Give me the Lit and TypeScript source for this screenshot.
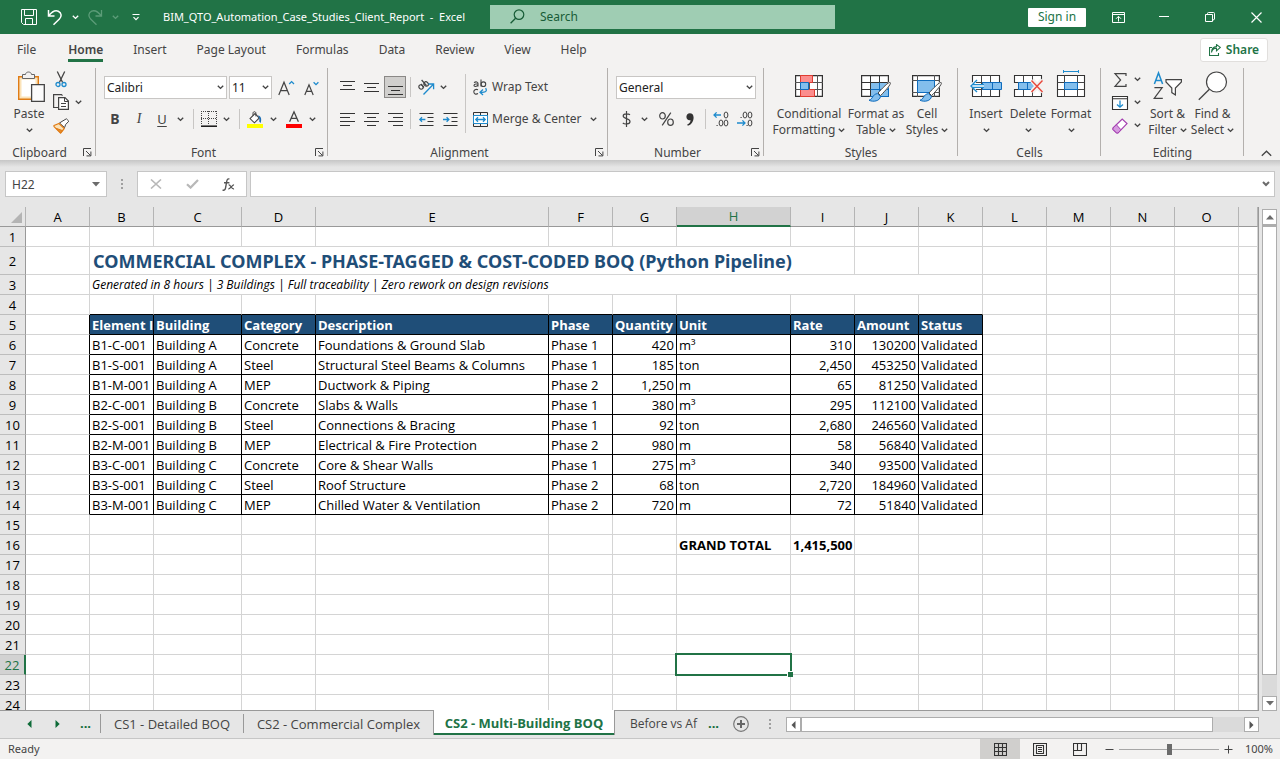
import { LitElement, html, svg, css, nothing, TemplateResult } from 'lit';
import { customElement, property } from 'lit/decorators.js';
import { classMap } from 'lit/directives/class-map.js';

const icon = (w: number, h: number, body: unknown) =>
  html`<svg width=${w} height=${h} viewBox="0 0 ${w} ${h}" fill="none" stroke="#444" stroke-width="1" aria-hidden="true">${body}</svg>`;

const chev = () => icon(7, 5, svg`<path d="M.8 .8L3.5 3.4L6.2 .8" stroke-width="1.4"/>`);

const I = {
  save: () => icon(17, 17, svg`<path stroke="#fff" d="M.5 .5H15.5V15.5H2.5L.5 13.5ZM3.5 .5V6.5H12.5V.5M4.5 15.5V9.5H11.5V15.5"/>`),
  undo: () => icon(16, 17, svg`<path stroke="#fff" stroke-width="1.5" d="M1.5 1V7H7.5M1.8 6.7C5 2.6 8.4 1 11.3 2.2C14.8 3.8 14.8 7.6 12.4 10L6.5 15.8"/>`),
  redo: () => icon(16, 17, svg`<path stroke="#5c9c78" stroke-width="1.3" d="M14.5 1V7H8.5M14.2 6.7C11 2.6 7.6 1 4.7 2.2C1.2 3.8 1.2 7.6 3.6 10L9.5 15.8"/>`),
  wchev: () => icon(7, 5, svg`<path stroke="#fff" d="M.8 .8L3.5 3.4L6.2 .8" stroke-width="1.4"/>`),
  dchev: () => icon(7, 5, svg`<path stroke="#5c9c78" d="M.8 .8L3.5 3.4L6.2 .8" stroke-width="1.4"/>`),
  qat: () => icon(8, 7, svg`<path stroke="#fff" d="M.5 .5H7.5M1.5 3.2L4 5.7L6.5 3.2" stroke-width="1.2"/>`),
  find: () => icon(15, 15, svg`<circle cx="9" cy="5.6" r="4.8" stroke="#185c37" stroke-width="1.2"/><path stroke="#185c37" stroke-width="1.3" d="M5.6 9.2L.6 14.3"/>`),
  ribbonOpts: () => icon(13, 11, svg`<path stroke="#fff" d="M.5 .5H12.5V10.5H.5ZM.5 2.5H12.5M6.5 9.5V4.5M4 6.8L6.5 4.3L9 6.8"/>`),
  min: () => icon(10, 10, svg`<path stroke="#fff" d="M0 4.5H10"/>`),
  restore: () => icon(10, 10, svg`<path stroke="#fff" d="M.5 2.5H7.5V9.5H.5ZM2.5 2.5V1.5Q2.5 .5 3.5 .5H8.5Q9.5 .5 9.5 1.5V7Q9.5 8 7.5 8"/>`),
  close: () => icon(11, 11, svg`<path stroke="#fff" stroke-width="1.2" d="M.5 .5L10.5 10.5M10.5 .5L.5 10.5"/>`),
  share: () => icon(12, 12, svg`<path stroke="#217346" stroke-width="1.1" d="M3 3.5H.5V11.5H9.5V9M2.5 8.5C3 5.5 5 4.2 7.5 4.2V6.8L11.3 3.4L7.5 .6V2.6C4.5 2.8 2.6 5 2.5 8.5Z"/>`),
  paste: () => icon(28, 32, svg`<path stroke="#e07c16" fill="#fbe3b9" stroke-width="1.4" d="M1.7 5.7H21.3V28.3H1.7Z"/><path stroke="none" fill="#fff" d="M4.5 8.5H18.5V25.5H4.5Z"/><path fill="#f3f2f1" stroke="#666" d="M5.5 7.5V3.5H8.5C8.7 .2 14.3 .2 14.5 3.5H17.5V7.5Z"/><path fill="#fbfbfb" stroke="#444" stroke-width="1.3" d="M14.6 13.6H27.3V30.4H14.6Z"/>`),
  cut: () => icon(12, 17, svg`<path stroke-width="1.3" d="M2.3 .5L7.6 11.5M9.7 .5L4.4 11.5"/><circle cx="3" cy="13.5" r="2" stroke="#1e8bcd" stroke-width="1.3"/><circle cx="9" cy="13.5" r="2" stroke="#1e8bcd" stroke-width="1.3"/>`),
  copy: () => icon(17, 17, svg`<path stroke-width="1.2" d="M5.5 13.5H.6V.6H8.5L9.5 1.6"/><path fill="#fff" stroke-width="1.2" d="M5.6 3.6H12L15.4 7V15.4H5.6Z"/><path d="M11.5 3.5V7.5H15.5M8 9.5H13M8 12.5H13"/>`),
  painter: () => icon(17, 16, svg`<path stroke="#444" fill="#fff" d="M6.5 5L9 3.4L13.4 .8L15.8 3.2L12.6 6.6L11.6 9.6Z"/><path stroke="#e07c16" fill="#fbe3b9" stroke-width="1.2" d="M1 7.5L6 5.5L11.3 10.5L7.6 15L1 8.6Z"/><path stroke="#e07c16" fill="#e98d2c" d="M3 10.3L9.5 12.6L7.6 15Z"/>`),
  launch: () => icon(9, 9, svg`<path d="M.5 8V.5H8M3 3L7.5 7.5M7.9 3.5V7.9H3.5"/>`),
  growFont: () => icon(17, 16, svg`<path stroke-width="1.2" d="M.8 15L6 2.2L11.2 15M2.6 10.6H9.4"/><path stroke="#1e8bcd" stroke-width="1.3" d="M11.2 4L13.6 1.6L16 4"/>`),
  shrinkFont: () => icon(15, 16, svg`<path stroke-width="1.2" d="M.8 15L5 4.8L9.2 15M2.3 11.4H7.7"/><path stroke="#1e8bcd" stroke-width="1.3" d="M9.6 2.2L12 4.6L14.4 2.2"/>`),
  borders: () => icon(16, 16, svg`<path stroke-dasharray="1 1" d="M0 .5H16M0 7.5H15M.5 0V14M7.5 0V14M15.5 0V14"/><path stroke="#111" stroke-width="1.5" d="M0 15.2H16"/>`),
  fill: () => icon(16, 17, svg`<path fill="#fff" stroke-width="1.1" d="M3 7.6L8 2.6L12.3 7L7.4 11.8Z"/><path d="M6 4.6V2.2C6.1 .2 8.8 .2 8.9 2.2V5.4"/><path fill="#1e6fb4" stroke="none" d="M11 4.4C14 4.8 15 8 13.6 12L12.2 10.6L12.4 7.4Z"/><path fill="#ff0" stroke="none" d="M0 13H16V17H0Z"/>`),
  color: () => icon(16, 17, svg`<path stroke-width="1.3" d="M3.6 10.8L8 .8L12.4 10.8M5.2 7.4H10.8"/><path fill="#f00" stroke="none" d="M0 13H16V17H0Z"/>`),
  lines: (d: string) => icon(15, 15, svg`<path stroke="#333" stroke-width="1.1" d=${d}/>`),
  orient: () => icon(17, 16, svg`<g stroke-width="1.2"><ellipse cx="3" cy="8" rx="2" ry="2.3" transform="rotate(-45 3 8)"/><path d="M3 5L6 8.4"/><ellipse cx="8.2" cy="5" rx="2" ry="2.4" transform="rotate(-45 8.2 5)"/><path d="M3.6 1L8.6 6.6"/></g><path stroke="#1e8bcd" stroke-width="1.3" d="M5.5 15.5L15.4 5.2M10.4 5H15.6V10.2"/>`),
  wrap: () => icon(15, 17, svg`<g stroke-width="1.1"><path d="M1 3.6C2.8 2.4 5 2.8 5 4.6V7.6M5 5H3C.4 5.2 .5 7.6 2.4 7.5Q4.4 7.3 5 6"/><path d="M8 .5V7.6"/><circle cx="10.4" cy="5.2" r="2.3"/><path d="M5 10.8C2.6 9.6 .8 11 .8 12.8C.8 14.8 2.8 15.8 5 14.6"/></g><path stroke="#1e8bcd" stroke-width="1.3" d="M12.6 9.2C15 13 11 13.6 7.2 13.2M10 10.4L7 13.2L10 16"/>`),
  merge: () => icon(15, 15, svg`<path stroke="#333" d="M.5 .5H14.5V14.5H.5ZM7.5 .5V3M7.5 12V14.5"/><path stroke="#1e8bcd" fill="#fff" d="M.5 3.5H14.5V11.5H.5Z"/><path stroke="#1e8bcd" stroke-width="1.3" d="M3 7.5H12M5 5.3L2.8 7.5L5 9.7M10 5.3L12.2 7.5L10 9.7"/>`),
  outdent: () => icon(15, 13, svg`<path stroke="#333" d="M.5 .5H14.5M8.5 4.5H14.5M8.5 8.5H14.5M.5 12.5H14.5"/><path stroke="#1e8bcd" stroke-width="1.3" d="M.8 6.5H6.4M3 4.2L.8 6.5L3 8.8"/>`),
  indent: () => icon(15, 13, svg`<path stroke="#333" d="M.5 .5H14.5M8.5 4.5H14.5M8.5 8.5H14.5M.5 12.5H14.5"/><path stroke="#1e8bcd" stroke-width="1.3" d="M0 6.5H5.8M3.6 4.2L5.9 6.5L3.6 8.8"/>`),
  dollar: () => icon(9, 16, svg`<path stroke-width="1.2" d="M8 3.8C6.5 2.6 1.2 2.2 1.2 5C1.2 8 8 7.2 8 10.4C8 13.6 2.4 13.4 .8 12M4.5 0V16"/>`),
  percent: () => icon(15, 14, svg`<g stroke-width="1.2"><ellipse cx="3.5" cy="3.8" rx="2.8" ry="3.2"/><ellipse cx="11.5" cy="10.2" rx="2.8" ry="3.2"/><path d="M11.8 .6L3.2 13.4"/></g>`),
  comma: () => icon(8, 13, svg`<path stroke="none" fill="#333" d="M3.8 .2C6.2 .2 7.6 1.8 7.6 4.4C7.6 8.4 5.4 11.6 1.8 12.8L1.2 11.6C3.4 10.4 4.4 9 4.6 7.2C2.2 7.8 .4 6.2 .4 3.8C.4 1.8 1.8 .2 3.8 .2Z"/>`),
  incDec: () => icon(16, 16, svg`<path stroke="#1e8bcd" stroke-width="1.3" d="M1 4H8M3.6 1.4L1 4L3.6 6.6"/><g><ellipse cx="13" cy="4" rx="1.9" ry="3"/><ellipse cx="8" cy="12" rx="1.9" ry="3"/><ellipse cx="13" cy="12" rx="1.9" ry="3"/><path d="M3.5 14.5H4.7"/></g>`),
  decDec: () => icon(16, 16, svg`<path stroke="#1e8bcd" stroke-width="1.3" d="M0 12H8M5.4 9.4L8 12L5.4 14.6"/><g><ellipse cx="8" cy="4" rx="1.9" ry="3"/><ellipse cx="13" cy="4" rx="1.9" ry="3"/><ellipse cx="13" cy="12" rx="1.9" ry="3"/><path d="M3.5 6.5H4.7M9.5 14.5H10.7"/></g>`),
  condFmt: () => icon(28, 24, svg`<path fill="#fff" stroke="#333" stroke-width="1.2" d="M.6 1.6H27.4V22.4H.6Z"/><path stroke="#555" d="M5.5 1V23M14.5 1V23M22.5 1V23M0 8.5H28M0 15.5H28"/><path fill="#fb8d8d" stroke="#e03c31" d="M5.5 1.5H17.5V8.5H5.5ZM5.5 15.5H19.5V22.5H5.5Z"/><path fill="#83beec" stroke="#0f6cbd" d="M5.5 8.5H13.5V15.5H5.5Z"/>`),
  fmtTable: () => icon(30, 24, svg`<path fill="#fff" stroke="#333" stroke-width="1.2" d="M.6 1.6H27.4V22.4H.6Z"/><path fill="#83beec" stroke="#0f6cbd" d="M9.5 8.5H27.5V22.5H9.5Z"/><path stroke="#333" d="M.5 8.5H27M.5 15.5H9M9.5 1V22M18.5 1V8"/><path stroke="#0f6cbd" d="M9.5 15.5H27.5M18.5 8.5V22.5"/>${brush}`),
  cellStyles: () => icon(30, 24, svg`<path fill="#fff" stroke="#333" stroke-width="1.2" d="M.6 1.6H27.4V22.4H.6Z"/><path stroke="#555" d="M5.5 1V23M22.5 1V23M0 6.5H28M0 18.5H28"/><path fill="#83beec" stroke="#0f6cbd" d="M5.5 6.5H22.5V18.5H5.5Z"/>${brush}`),
  insert: () => icon(32, 24, svg`<path fill="#fff" stroke="#333" stroke-width="1.1" d="M2.5 1.5H29.5V22.5H2.5Z"/><path stroke="#444" d="M2.5 8.5H29.5M2.5 15.5H29.5M11.5 1.5V22.5M20.5 1.5V22.5"/><path fill="#83beec" stroke="#0f6cbd" d="M12.5 8.5H31.5V15.5H12.5ZM22.5 8.5V15.5"/><path fill="#fff" stroke="none" d="M0 10.5L6 5V10H14V14H6V19Z"/><path stroke="#1e8bcd" stroke-width="1.4" d="M7 6L1 12L7 18M2 10.6H14M2 13.4H14"/>`),
  remove: () => icon(32, 24, svg`<path fill="#fff" stroke="#333" stroke-width="1.1" d="M2.5 1.5H29.5V8.5H2.5ZM2.5 15.5H29.5V22.5H2.5Z"/><path stroke="#444" d="M11.5 1.5V8.5M20.5 1.5V8.5M11.5 15.5V22.5M20.5 15.5V22.5"/><path fill="#83beec" stroke="#0f6cbd" d="M6.5 8.5H20L23 12L20 15.5H6.5ZM15.5 8.5V15.5"/><path stroke="#f3f2f1" stroke-width="5" d="M20 6L30.5 18M30.5 6L20 18"/><path stroke="#e8463a" stroke-width="1.4" d="M19.5 6.5L30.5 18M30.5 6.5L19.5 18"/>`),
  format: () => icon(28, 32, svg`<path fill="#fff" stroke="#333" stroke-width="1.1" d="M.5 5.5H27.5V26.5H.5Z"/><path stroke="#444" d="M.5 12.5H27.5M.5 19.5H27.5M7.5 5.5V26.5M20.5 5.5V26.5"/><path fill="#83beec" stroke="#0f6cbd" d="M7.5 12.5H20.5V19.5H7.5Z"/><path stroke="#1e8bcd" d="M6.5 0V3M21.5 0V3M6.5 1.5H21.5"/>`),
  sum: () => icon(13, 14, svg`<path stroke-width="1.2" d="M12 3V.6H1L6.6 7L1 13.4H12V11"/>`),
  fillDown: () => icon(16, 14, svg`<path fill="#fff" stroke="#333" stroke-width="1.1" d="M.5 .5H15.5V13.5H.5ZM.5 2.8H15.5"/><path stroke="#1e8bcd" stroke-width="1.3" d="M8 4.4V11M5 8.4L8 11.2L11 8.4"/>`),
  eraser: () => icon(16, 16, svg`<path fill="#fff" stroke="#a43fb0" stroke-width="1.2" d="M1 10L10.2 1L15 5.6L6 15H4.6L1 11.4Z"/><path fill="#d69be0" stroke="#a43fb0" d="M1 10L4.4 6.8L9 11.8L6 15H4.6L1 11.4Z"/>`),
  sort: () => icon(30, 28, svg`<path stroke="#1e8bcd" stroke-width="1.5" d="M1.4 12L5.5 1L9.6 12M2.8 8.4H8.2"/><path stroke-width="1.2" d="M1.4 15.6H9.2L1.2 26.4H9.8"/><path fill="#fff" stroke-width="1.2" d="M13 7.6H28.4V10L22.4 16V23L18.8 20.6V16L13 10Z"/>`),
  search: () => icon(30, 30, svg`<circle cx="18.5" cy="11" r="10" fill="#fff" stroke-width="1.2"/><path stroke-width="1.3" d="M11.4 18.2L.8 28.8"/>`),
  collapse: () => icon(11, 7, svg`<path stroke-width="1.3" d="M.8 5.8L5.5 1.2L10.2 5.8"/>`),
  cancel: () => icon(12, 10, svg`<path stroke="#b8b8b8" stroke-width="1.6" d="M1 .5L11 9.5M11 .5L1 9.5"/>`),
  check: () => icon(13, 10, svg`<path stroke="#b8b8b8" stroke-width="2.2" d="M1 5.2L4.6 8.6L12 1"/>`),
  fx: () => icon(13, 13, svg`<path stroke="#555" stroke-width="1.4" d="M7.4 1.2C5.6 .2 5 1.6 4.6 4L3.6 9.6C3.2 12 2.2 12.6 .6 12M2 4.8H7.4"/><path stroke="#555" stroke-width="1.2" d="M6.6 7C9 6.4 9 11.6 12 10.8M12 6.8C10.4 6.4 8.4 11.2 6.2 11"/>`),
  down: () => icon(8, 5, svg`<path stroke="none" fill="#6b6b6b" d="M0 0H8L4 4.5Z"/>`),
  up: () => icon(8, 5, svg`<path stroke="none" fill="#6b6b6b" d="M0 4.5H8L4 0Z"/>`),
  left: () => icon(5, 8, svg`<path stroke="none" fill="#555" d="M4.5 0V8L.5 4Z"/>`),
  right: () => icon(5, 8, svg`<path stroke="none" fill="#555" d="M.5 0V8L4.5 4Z"/>`),
  navLeft: () => icon(5, 8, svg`<path stroke="none" fill="#0e6b38" d="M4.5 0V8L.3 4Z"/>`),
  navRight: () => icon(5, 8, svg`<path stroke="none" fill="#0e6b38" d="M.5 0V8L4.7 4Z"/>`),
  plus: () => icon(16, 16, svg`<circle cx="8" cy="8" r="7.3" stroke="#777" stroke-width="1.2"/><path stroke="#666" stroke-width="2" d="M8 4V12M4 8H12"/>`),
  dots: () => icon(2, 12, svg`<path stroke="none" fill="#a0a0a0" d="M0 1H2V3H0ZM0 5H2V7H0ZM0 9H2V11H0Z"/>`),
  expand: () => icon(8, 6, svg`<path stroke="#6b6b6b" stroke-width="2" d="M1 1L4 4L7 1"/>`),
  viewNormal: () => icon(13, 13, svg`<path stroke="#333" stroke-width="1.1" d="M.5 .5H12.5V12.5H.5ZM4.5 .5V12.5M8.5 .5V12.5M.5 4.5H12.5M.5 8.5H12.5"/>`),
  viewPage: () => icon(14, 13, svg`<path stroke="#333" stroke-width="1.1" d="M.5 .5H13.5V12.5H.5ZM3.5 2.5H10.5V10.5H3.5ZM5 4.5H9M5 6.5H9M5 8.5H9"/>`),
  viewBreak: () => icon(14, 13, svg`<path stroke="#333" stroke-width="1.1" d="M.5 .5H13.5V12.5H.5ZM.5 7.5H8.5V.5M4.5 .5V7.5"/>`),
};

const brush = svg`<path stroke="#f3f2f1" stroke-width="4" d="M29 9L17 22"/><path fill="#fff" stroke="#444" d="M29.2 8.6C30.6 10 24 17 19.6 21.6L17 19C21 14.6 27.8 7.4 29.2 8.6Z"/><path fill="#83beec" stroke="#0f6cbd" d="M16.4 19.6L19.4 22.4C19.2 27 12 28.4 8 26.2C12 25.4 11 20.4 16.4 19.6Z"/>`;

const tool = (label: string, body: unknown, cls = '') =>
  html`<button class="tool ${cls}" type="button" aria-label=${label} title=${label}>${body}</button>`;

const sep = (cls = '') => html`<span class="sep ${cls}"></span>`;

@customElement('ribbon-bar')
class RibbonBar extends LitElement {
  static styles = css`
    :host { display: block; }
    * { box-sizing: border-box; }
    button { border: 0; padding: 0; margin: 0; background: none; font: inherit; color: inherit; }
    svg { display: block; flex: none; overflow: visible; }
    .ribbon { display: flex; height: 94px; padding-top: 2px; }
    .group { display: flex; flex-direction: column; height: 92px; flex: none;
      background: linear-gradient(#b3b0ad, #b3b0ad) no-repeat right top / 1px 88px; }
    .clipboard { width: 96px; }
    .font { width: 232px; }
    .alignment { width: 280px; }
    .number { width: 156px; }
    .styles { width: 194px; }
    .cells { width: 143px; }
    .editing { width: 143px; }
    .body { flex: 1; min-height: 0; display: flex; }
    .foot { display: grid; grid-template-columns: 1fr; height: 15px; line-height: 15px; text-align: center; align-items: center; justify-items: center; }
    .foot.has-launcher { grid-template-columns: 1fr 17px; }
    .tool { display: flex; align-items: center; justify-content: center; height: 22px; min-width: 0; }
    .tool.on { border: 1px solid #8a8886; background: #d0cfcd; width: 22px; }
    .sep { width: 1px; height: 20px; background: #c8c6c4; justify-self: center; }
    .sep.tall { height: 59px; margin: 6px 3px 0 3px; flex: none; }
    .rows { display: grid; grid-auto-rows: 22px; row-gap: 10px; padding-top: 8px; align-content: start; }
    .row { display: grid; align-items: center; }
    .pick { position: relative; display: block; height: 23px; }
    .pick select { appearance: none; width: 100%; height: 23px; border: 1px solid #c8c6c4; border-radius: 0; background: #fff; font: inherit; color: #222; padding: 0 14px 0 2px; }
    .pick svg { position: absolute; right: 3px; top: 9px; }
    .font .rows { padding-left: 7px; }
    .f1 { grid-template-columns: 123px 43px 24px 22px; column-gap: 2px; padding-left: 1px; }
    .f2 { grid-template-columns: 24px 24px 22px 14px 13px 18px 16px 10px 22px 14px 28px 8px; }
    .f2 .b { font-weight: 700; font-size: 14px; }
    .f2 .i { font-style: italic; font-size: 14px; font-family: "Liberation Serif", serif; }
    .f2 .u { text-decoration: underline; text-underline-offset: 2px; font-size: 13px; }
    .alignment .rows { padding-left: 7px; }
    .a1 { grid-template-columns: 24px 24px 24px 7px 24px 10px 14px; }
    .a2 { grid-template-columns: 24px 24px 24px 7px 24px 24px; }
    .a1 .on { justify-self: center; }
    .wide { display: flex; align-items: center; height: 22px; gap: 4px; padding: 0; white-space: nowrap; text-align: left; }
    .wide .more { margin-left: 4px; }
    .alignment .acts { padding-left: 4px; }
    .number .rows { padding-left: 8px; }
    .n1 { grid-template-columns: 140px; }
    .n2 { grid-template-columns: 20px 16px 28px 20px 10px 22px 26px; }
    .big { display: flex; flex-direction: column; align-items: center; line-height: 16px; white-space: nowrap; text-align: center; }
    .big .pic { height: 38px; padding-bottom: 2px; display: flex; align-items: center; justify-content: center; }
    .big .line { display: flex; align-items: center; justify-content: center; gap: 3px; height: 16px; }
    .big .lbl { display: block; }
    .clipboard .body { padding-left: 8px; }
    .clipboard .big { width: 42px; }
    .clipboard .big .pic { padding: 0 0 0 4px; }
    .stack { display: grid; grid-template-columns: 22px 12px; grid-auto-rows: 23px; align-items: center; justify-items: center; align-content: start; }
    .styles .body { display: grid; grid-template-columns: 74px 60px 42px; padding-left: 8px; align-items: start; justify-content: start; }
    .cells .body { display: grid; grid-template-columns: 42px 42px 44px; padding-left: 7px; align-items: start; }
    .editing .body { padding-left: 8px; }
    .editing .stack { margin-right: 2px; }
    .editing .big { width: 45px; }
    .tail { flex: 1; display: flex; align-items: flex-end; justify-content: flex-end; padding: 0 8px 3px 0; }
  `;

  private group(cls: string, name: string, body: unknown, launcher = false) {
    return html`<section class="group ${cls}" aria-label=${name}>
      <div class="body">${body}</div>
      <div class="foot ${launcher ? 'has-launcher' : ''}"><span>${name}</span>${launcher ? html`<button type="button" aria-label="${name} settings">${I.launch()}</button>` : nothing}</div>
    </section>`;
  }

  private big(pic: TemplateResult, l1: string, l2 = '') {
    return html`<button class="big" type="button">
      <span class="pic">${pic}</span><span class="lbl">${l1}</span>
      <span class="line">${l2}${chev()}</span>
    </button>`;
  }

  private pick(label: string, opts: string[]) {
    return html`<label class="pick"><select aria-label=${label}>${opts.map((o) => html`<option>${o}</option>`)}</select>${chev()}</label>`;
  }

  render() {
    return html`<div class="ribbon">
      ${this.group('clipboard', 'Clipboard', html`
        ${this.big(I.paste(), 'Paste')}
        <div class="stack">
          ${tool('Cut', I.cut())}<span></span>
          ${tool('Copy', I.copy())}${tool('Copy options', chev())}
          ${tool('Format Painter', I.painter())}
        </div>`, true)}
      ${this.group('font', 'Font', html`<div class="rows">
          <div class="row f1">${this.pick('Font', ['Calibri', 'Arial'])}${this.pick('Font size', ['11', '12', '14'])}${tool('Increase font size', I.growFont())}${tool('Decrease font size', I.shrinkFont())}</div>
          <div class="row f2">
            ${tool('Bold', 'B', 'b')}${tool('Italic', 'I', 'i')}${tool('Underline', 'U', 'u')}${tool('Underline options', chev())}${sep()}
            ${tool('Borders', I.borders())}${tool('Border options', chev())}${sep()}
            ${tool('Fill color', I.fill())}${tool('Fill options', chev())}${tool('Font color', I.color())}${tool('Font color options', chev())}
          </div></div>`, true)}
      ${this.group('alignment', 'Alignment', html`
        <div class="rows">
          <div class="row a1">
            ${tool('Top align', I.lines('M0 1.5H15M3 5.5H12M0 9.5H15'))}${tool('Middle align', I.lines('M0 3.5H15M3 7.5H12M0 11.5H15'))}${tool('Bottom align', I.lines('M0 6.5H15M3 10.5H12M0 14.5H15'), 'on')}${sep()}
            ${tool('Orientation', I.orient())}${tool('Orientation options', chev())}
          </div>
          <div class="row a2">
            ${tool('Align left', I.lines('M0 1.5H15M0 5.5H10M0 9.5H15M0 13.5H10'))}${tool('Center', I.lines('M0 1.5H15M3 5.5H12M0 9.5H15M3 13.5H12'))}${tool('Align right', I.lines('M0 1.5H15M5 5.5H15M0 9.5H15M5 13.5H15'))}${sep()}
            ${tool('Decrease indent', I.outdent())}${tool('Increase indent', I.indent())}
          </div>
        </div>
        ${sep('tall')}
        <div class="rows acts">
          <button class="wide" type="button">${I.wrap()} Wrap Text</button>
          <button class="wide" type="button">${I.merge()} Merge &amp; Center<span class="more">${chev()}</span></button>
        </div>`, true)}
      ${this.group('number', 'Number', html`<div class="rows">
          <div class="row n1">${this.pick('Number format', ['General', 'Number', 'Currency'])}</div>
          <div class="row n2">${tool('Accounting format', I.dollar())}${tool('Accounting options', chev())}${tool('Percent style', I.percent())}${tool('Comma style', I.comma())}${sep()}${tool('Increase decimal', I.incDec())}${tool('Decrease decimal', I.decDec())}</div>
        </div>`, true)}
      ${this.group('styles', 'Styles', html`
        ${this.big(I.condFmt(), 'Conditional', 'Formatting')}
        ${this.big(I.fmtTable(), 'Format as', 'Table')}
        ${this.big(I.cellStyles(), 'Cell', 'Styles')}`)}
      ${this.group('cells', 'Cells', html`
        ${this.big(I.insert(), 'Insert')}${this.big(I.remove(), 'Delete')}${this.big(I.format(), 'Format')}`)}
      ${this.group('editing', 'Editing', html`
        <div class="stack">
          ${tool('AutoSum', I.sum())}${tool('AutoSum options', chev())}
          ${tool('Fill', I.fillDown())}${tool('Fill options', chev())}
          ${tool('Clear', I.eraser())}${tool('Clear options', chev())}
        </div>
        ${this.big(I.sort(), 'Sort &', 'Filter')}
        ${this.big(I.search(), 'Find &', 'Select')}`)}
      <div class="tail"><button type="button" aria-label="Collapse the ribbon">${I.collapse()}</button></div>
    </div>`;
  }
}

const COLS = ['A', 'B', 'C', 'D', 'E', 'F', 'G', 'H', 'I', 'J', 'K', 'L', 'M', 'N', 'O', ''];
const HEAD = ['Element ID', 'Building', 'Category', 'Description', 'Phase', 'Quantity', 'Unit', 'Rate', 'Amount', 'Status'];
const DATA = [
  ['B1-C-001', 'Building A', 'Concrete', 'Foundations & Ground Slab', 'Phase 1', '420', 'm³', '310', '130200', 'Validated'],
  ['B1-S-001', 'Building A', 'Steel', 'Structural Steel Beams & Columns', 'Phase 1', '185', 'ton', '2,450', '453250', 'Validated'],
  ['B1-M-001', 'Building A', 'MEP', 'Ductwork & Piping', 'Phase 2', '1,250', 'm', '65', '81250', 'Validated'],
  ['B2-C-001', 'Building B', 'Concrete', 'Slabs & Walls', 'Phase 1', '380', 'm³', '295', '112100', 'Validated'],
  ['B2-S-001', 'Building B', 'Steel', 'Connections & Bracing', 'Phase 1', '92', 'ton', '2,680', '246560', 'Validated'],
  ['B2-M-001', 'Building B', 'MEP', 'Electrical & Fire Protection', 'Phase 2', '980', 'm', '58', '56840', 'Validated'],
  ['B3-C-001', 'Building C', 'Concrete', 'Core & Shear Walls', 'Phase 1', '275', 'm³', '340', '93500', 'Validated'],
  ['B3-S-001', 'Building C', 'Steel', 'Roof Structure', 'Phase 2', '68', 'ton', '2,720', '184960', 'Validated'],
  ['B3-M-001', 'Building C', 'MEP', 'Chilled Water & Ventilation', 'Phase 2', '720', 'm', '72', '51840', 'Validated'],
];

@customElement('sheet-grid')
class SheetGrid extends LitElement {
  static styles = css`
    :host { display: block; overflow: hidden; background: #fff; border-right: 1px solid #999; border-bottom: 1px solid #999; font: 13px/18px "Open Sans", "Noto Sans", sans-serif; color: #000; }
    * { box-sizing: border-box; }
    table { width: 100%; table-layout: fixed; border-collapse: separate; border-spacing: 0; }
    .c0 { width: 26px; } .c64 { width: 64px; } .c88 { width: 88px; } .c74 { width: 74px; } .c233 { width: 233px; } .c114 { width: 114px; }
    tr { height: 20px; }
    .r2 { height: 28px; }
    th, td { padding: 1px 2px 0; height: 20px; border-right: 1px solid #d4d4d4; border-bottom: 1px solid #d4d4d4; white-space: nowrap; overflow: hidden; text-align: left; font-weight: 400; }
    thead th { background: #e6e6e6; padding: 0; text-align: center; border-bottom-color: #999; border-right-color: #b4b4b4; }
    tbody th { background: #e6e6e6; text-align: center; padding: 1px 0 0; border-right-color: #999; border-bottom-color: #bdbdbd; }
    thead .corner { text-align: right; padding: 0 3px 3px 0; vertical-align: bottom; line-height: 0; }
    thead th.sel { background: #d2d2d2; color: #217346; border-bottom: 2px solid #217346; }
    tbody th.sel { background: #d2d2d2; color: #217346; border-right: 2px solid #217346; }
    td.kr { border-right-color: #000; }
    td.kb { border-bottom-color: #000; }
    td.head { background: #1f4e78; color: #fff; font-weight: 700; }
    td.num { text-align: right; }
    td.bold { font-weight: 700; }
    td.title { font: 700 18px/26px "Noto Sans", "Open Sans", sans-serif; color: #1f4e78; padding-left: 3px; }
    td.note { font-size: 12px; font-style: italic; }
    td.cursor { position: relative; overflow: visible; }
    .ring { position: absolute; inset: -2px; border: 2px solid #217346; }
    .knob { position: absolute; right: -3px; bottom: -3px; width: 6px; height: 6px; background: #217346; border-left: 1px solid #fff; border-top: 1px solid #fff; }
  `;

  private row(n: number) {
    const cells: TemplateResult[] = [];
    const inTable = n >= 5 && n <= 14;
    for (let c = 0; c < 16; c++) {
      if (n === 2 && c === 1) { cells.push(html`<td class="title" colspan="8">COMMERCIAL COMPLEX - PHASE-TAGGED &amp; COST-CODED BOQ (Python Pipeline)</td>`); c = 8; continue; }
      if (n === 3 && c === 1) { cells.push(html`<td class="note" colspan="10">Generated in 8 hours | 3 Buildings | Full traceability | Zero rework on design revisions</td>`); c = 10; continue; }
      const k = c >= 1 && c <= 10;
      const text = k && n === 5 ? HEAD[c - 1] : k && inTable ? DATA[n - 6][c - 1] : n === 16 && c === 7 ? 'GRAND TOTAL' : n === 16 && c === 8 ? '1,415,500' : '';
      const cursor = n === 22 && c === 7;
      const cls = {
        kr: inTable && c <= 10,
        kb: k && n >= 4 && n <= 14,
        head: k && n === 5,
        num: (n > 5 && inTable && [6, 8, 9].includes(c)) || (n === 16 && c === 8),
        bold: n === 16,
        cursor,
      };
      cells.push(html`<td class=${classMap(cls)}>${text}${cursor ? html`<span class="ring"></span><span class="knob"></span>` : nothing}</td>`);
    }
    return html`<tr class=${n === 2 ? 'r2' : ''}><th scope="row" class=${n === 22 ? 'sel' : ''}>${n}</th>${cells}</tr>`;
  }

  render() {
    const w = [0, 64, 64, 88, 74, 233, 64, 64, 114, 64, 64, 64, 64, 64, 64, 64];
    return html`<table>
      <colgroup>${w.map((x) => html`<col class="c${x}">`)}<col></colgroup>
      <thead><tr><th class="corner">${icon(11, 11, svg`<path stroke="none" fill="#b4b4b4" d="M11 0V11H0Z"/>`)}</th>${COLS.map((c) => html`<th scope="col" class=${c === 'H' ? 'sel' : ''}>${c}</th>`)}</tr></thead>
      <tbody>${Array.from({ length: 24 }, (_, i) => this.row(i + 1))}</tbody>
    </table>`;
  }
}

@customElement('app-root')
class AppRoot extends LitElement {
  @property({ type: String }) fileName = 'BIM_QTO_Automation_Case_Studies_Client_Report';

  static styles = css`
    :host { display: flex; flex-direction: column; height: 100vh; overflow: hidden; background: #e6e6e6; color: #444; font: 12px/16px "Noto Sans", "Open Sans", sans-serif; }
    * { box-sizing: border-box; }
    button { border: 0; padding: 0; margin: 0; background: none; font: inherit; color: inherit; display: flex; align-items: center; justify-content: center; }
    input { font: inherit; color: inherit; border: 0; outline: 0; padding: 0; margin: 0; min-width: 0; background: none; }
    svg { display: block; flex: none; }
    .titlebar { display: grid; grid-template-columns: 490px minmax(0, 345px) 1fr; align-items: center; height: 34px; flex: none; background: #217346; color: #fff; }
    .left { display: grid; grid-template-columns: 26px 26px 14px 26px 14px 28px 1fr; padding-left: 16px; align-items: center; }
    .left button { height: 34px; }
    .doc { font-size: 11px; white-space: pre; padding-left: 13px; }
    .search { display: flex; align-items: center; gap: 15px; height: 24px; margin-top: -1px; padding-left: 20px; background: #9fcdb3; color: #185c37; }
    .search input { flex: 1; }
    .search input::placeholder { color: #185c37; opacity: 1; }
    .right { display: flex; justify-content: flex-end; align-items: center; padding-right: 1px; }
    .signin { width: 58px; height: 19px; margin-right: 9px; background: #fff; color: #217346; border-radius: 1px; }
    .win { width: 46px; height: 34px; }
    .chrome { background: #f3f2f1; flex: none; }
    .menu { display: flex; align-items: center; height: 32px; padding: 0 12px 0 17px; gap: 30px; }
    .menu .tab { height: 24px; border-top: 3px solid transparent; border-bottom: 3px solid transparent; white-space: nowrap; }
    .menu .tab.on { font-weight: 600; border-bottom-color: #217346; margin-left: 2px; }
    .menu .share { margin-left: auto; width: 68px; height: 24px; gap: 5px; background: #fff; border: 1px solid #e1dfdd; border-radius: 3px; color: #217346; font-weight: 600; }
    .formula { display: grid; grid-template-columns: 102px 30px 110px 3px 1fr; flex: none; height: 47px; padding: 11px 5px 10px; background: linear-gradient(#c6c6c6, #e6e6e6 7px); }
    .box { display: flex; align-items: center; height: 26px; background: #fff; border: 1px solid #c6c6c6; }
    .namebox { padding: 1px 6px 0; }
    .namebox input { flex: 1; width: 60px; }
    .grip { display: flex; align-items: center; justify-content: center; }
    .acts button { flex: 1; height: 24px; }
    .entry { grid-column: 5; padding: 0 4px 0 6px; }
    .entry input { flex: 1; }
    .work { display: grid; grid-template-columns: 1fr 21px; flex: 1; min-height: 0; }
    .work sheet-grid { min-height: 0; min-width: 0; }
    .vscroll { display: grid; grid-template-rows: 16px 1fr 21px 15px; margin: 2px 3px 0 3px; background: #dadada; min-height: 0; }
    .sbtn { background: #fff; border: 1px solid #adadad; }
    .thumb { background: #fff; border: 1px solid #adadad; }
    .vscroll .thumb { border-top-width: 2px; }
    .tabs { display: flex; align-items: flex-start; height: 27px; flex: none; padding-right: 21px; font: 13px/24px "Open Sans", "Noto Sans", sans-serif; }
    .nav { display: flex; height: 25px; padding-left: 15px; }
    .nav button { width: 28px; }
    .more { color: #0e6b38; font-weight: 700; width: 29px; height: 25px; padding-bottom: 2px; }
    .sheet { height: 19px; margin-top: 3px; padding: 0 12px; border-left: 1px solid #999; white-space: nowrap; }
    .sheet.s1 { width: 143px; }
    .sheet.s2 { width: 190px; }
    .sheet.on { position: relative; z-index: 1; margin-top: -1px; height: 25px; width: 182px; padding: 0; background: #fff; color: #217346; font-weight: 700; border: 0 solid #999; border-width: 0 1px; box-shadow: inset 0 -2px #217346; }
    .sheet.cut { width: 84px; font-size: 12px; border: 0; padding: 0 0 0 15px; overflow: hidden; justify-content: flex-start; }
    .add { width: 26px; height: 25px; }
    .tabs .grip { width: 32px; height: 25px; }
    .hscroll { display: grid; grid-template-columns: 15px 1fr 31px 15px; flex: 1; height: 15px; margin-top: 6px; background: #dadada; }
    .status { display: flex; align-items: center; height: 21px; flex: none; background: #f3f2f1; border-top: 1px solid #c6c6c6; padding: 0 7px 0 8px; font-size: 11px; }
    .status .views { display: flex; margin-left: auto; }
    .views button { width: 40px; height: 20px; }
    .views .on { background: #d0cfcd; }
    .zoom { display: flex; align-items: center; }
    .zoom button { width: 19px; height: 20px; }
    .zoom input { appearance: none; width: 100px; height: 11px; background: linear-gradient(#a6a6a6, #a6a6a6) no-repeat center / 100% 1px; }
    .zoom input::-webkit-slider-thumb { appearance: none; width: 5px; height: 11px; background: #6b6b6b; }
    .pct { width: 35px; text-align: right; }
  `;

  render() {
    const menus = ['File', 'Home', 'Insert', 'Page Layout', 'Formulas', 'Data', 'Review', 'View', 'Help'];
    return html`
      <header class="titlebar">
        <div class="left">
          <button type="button" aria-label="Save">${I.save()}</button>
          <button type="button" aria-label="Undo">${I.undo()}</button>
          <button type="button" aria-label="Undo options">${I.wchev()}</button>
          <button type="button" aria-label="Redo">${I.redo()}</button>
          <button type="button" aria-label="Redo options">${I.dchev()}</button>
          <button type="button" aria-label="Customize toolbar">${I.qat()}</button>
          <span class="doc">${this.fileName}  -  Excel</span>
        </div>
        <label class="search">${I.find()}<input type="search" placeholder="Search" aria-label="Search"></label>
        <div class="right">
          <button class="signin" type="button">Sign in</button>
          <button class="win" type="button" aria-label="Ribbon display options">${I.ribbonOpts()}</button>
          <button class="win" type="button" aria-label="Minimize">${I.min()}</button>
          <button class="win" type="button" aria-label="Restore">${I.restore()}</button>
          <button class="win" type="button" aria-label="Close">${I.close()}</button>
        </div>
      </header>
      <div class="chrome">
        <nav class="menu">
          ${menus.map((m) => html`<button type="button" class="tab ${m === 'Home' ? 'on' : ''}">${m}</button>`)}
          <button type="button" class="share">${I.share()}<span>Share</span></button>
        </nav>
        <ribbon-bar></ribbon-bar>
      </div>
      <div class="formula">
        <div class="box namebox"><input aria-label="Name box" value="H22"><button type="button" aria-label="Names">${I.down()}</button></div>
        <span class="grip">${I.dots()}</span>
        <div class="box acts">
          <button type="button" aria-label="Cancel">${I.cancel()}</button>
          <button type="button" aria-label="Enter">${I.check()}</button>
          <button type="button" aria-label="Insert function">${I.fx()}</button>
        </div>
        <div class="box entry"><input aria-label="Formula"><button type="button" aria-label="Expand formula bar">${I.expand()}</button></div>
      </div>
      <main class="work">
        <sheet-grid></sheet-grid>
        <div class="vscroll">
          <button class="sbtn" type="button" aria-label="Scroll up">${I.up()}</button>
          <span class="thumb"></span><span></span>
          <button class="sbtn" type="button" aria-label="Scroll down">${I.down()}</button>
        </div>
      </main>
      <nav class="tabs">
        <div class="nav">
          <button type="button" aria-label="Previous sheet">${I.navLeft()}</button>
          <button type="button" aria-label="Next sheet">${I.navRight()}</button>
        </div>
        <button type="button" class="more">...</button>
        <button type="button" class="sheet s1">CS1 - Detailed BOQ</button>
        <button type="button" class="sheet s2">CS2 - Commercial Complex</button>
        <button type="button" class="sheet on">CS2 - Multi-Building BOQ</button>
        <button type="button" class="sheet cut">Before vs Af</button>
        <button type="button" class="more">...</button>
        <button type="button" class="add" aria-label="New sheet">${I.plus()}</button>
        <span class="grip">${I.dots()}</span>
        <div class="hscroll">
          <button class="sbtn" type="button" aria-label="Scroll left">${I.left()}</button>
          <span class="thumb"></span><span></span>
          <button class="sbtn" type="button" aria-label="Scroll right">${I.right()}</button>
        </div>
      </nav>
      <footer class="status">
        <span>Ready</span>
        <div class="views">
          <button type="button" class="on" aria-label="Normal view">${I.viewNormal()}</button>
          <button type="button" aria-label="Page layout view">${I.viewPage()}</button>
          <button type="button" aria-label="Page break preview">${I.viewBreak()}</button>
        </div>
        <div class="zoom">
          <button type="button" aria-label="Zoom out">${icon(9, 9, svg`<path d="M.5 4.5H8.5"/>`)}</button>
          <input type="range" min="10" max="190" value="100" aria-label="Zoom">
          <button type="button" aria-label="Zoom in">${icon(9, 9, svg`<path d="M.5 4.5H8.5M4.5 .5V8.5"/>`)}</button>
        </div>
        <span class="pct">100%</span>
      </footer>`;
  }
}
